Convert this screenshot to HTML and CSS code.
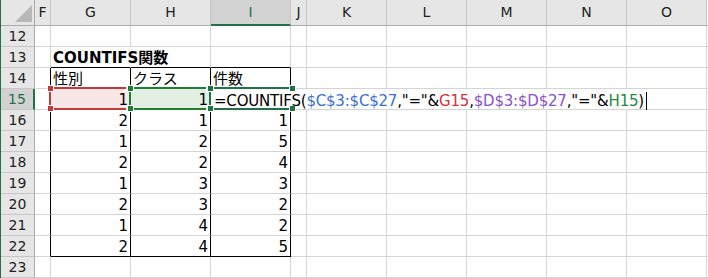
FILE: index.html
```html
<!DOCTYPE html>
<html lang="ja">
<head>
  <meta charset="UTF-8" />
  <title>COUNTIFS関数</title>
  <link rel="stylesheet" href="styles.css">
</head>
<body>

  <div class="sheet" id="sheet"></div>

  <script>
    const sheet = document.getElementById("sheet");
    const cols = ["F", "G", "H", "I", "J", "K", "L", "M", "N", "O"];
    const g = [1, 2, 1, 2, 1, 2, 1, 2];
    const h = [1, 1, 2, 2, 3, 3, 4, 4];
    const cnt = ["", 1, 5, 4, 3, 2, 2, 5];

    const formula =
      '=COUNTIFS(<span class="f-blue">$C$3:$C$27</span>,"="&amp;<span class="f-red">G15</span>,' +
      '<span class="f-purple">$D$3:$D$27</span>,"="&amp;<span class="f-green">H15</span>)<span class="caret"></span>';

    const corners = '<i class="sq tl"></i><i class="sq tr"></i><i class="sq bl"></i><i class="sq br"></i>';

    // header row
    let html = '<div class="c hd corner"><span class="tri"></span></div>';
    cols.forEach(c => {
      html += `<div class="c hd${c === "I" ? " hd-on" : ""}">${c}</div>`;
    });
    html += '<div class="c hd end"></div>';

    for (let r = 12; r <= 23; r++) {
      html += `<div class="c rh${r === 15 ? " rh-on" : ""}">${r}</div>`;
      cols.forEach(c => {
        let cls = "c";
        let txt = "";
        const inTable = r >= 14 && r <= 22;
        if (inTable && ["F", "G", "H", "I"].includes(c)) cls += " bk-r";
        if ((r === 13 || r === 14 || r === 22) && ["G", "H", "I"].includes(c)) cls += " bk-b";
        if (r === 15 && ["I", "J", "K", "L", "M", "N"].includes(c)) cls += " no-r";

        if (r === 13 && c === "G") { txt = '<b class="title">COUNTIFS関数</b>'; cls += " no-r"; }
        if (r === 14) {
          if (c === "G") txt = "性別";
          if (c === "H") txt = "クラス";
          if (c === "I") txt = "件数";
          if (["G", "H", "I"].includes(c)) cls += " jp";
        }
        if (r >= 15 && r <= 22) {
          const i = r - 15;
          if (c === "G") { txt = g[i]; cls += " num"; }
          if (c === "H") { txt = h[i]; cls += " num"; }
          if (c === "I" && r > 15) { txt = cnt[i]; cls += " num"; }
        }
        if (r === 15 && c === "G") txt = `<span class="ref ref-red">${corners}</span><span class="v">${txt}</span>`;
        if (r === 15 && c === "H") txt = `<span class="ref ref-green">${corners}</span><span class="v">${txt}</span>`;
        if (r === 15 && c === "I") {
          txt = `<span class="edit">${corners}</span><span class="v formula">${formula}</span>`;
        }
        html += `<div class="${cls}">${txt}</div>`;
      });
      html += '<div class="c end"></div>';
    }
    sheet.innerHTML = html;
  </script>

</body>
</html>
```

FILE: styles.css
```css
body {
  margin: 0;
  background: #fff;
}

.sheet {
  display: grid;
  grid-template-columns: 34px 16px repeat(3, 80px) 16px repeat(5, 80px) 1px;
  grid-template-rows: 26px repeat(12, 21px);
  border-left: 1px solid #217346;
  width: 707px;
  font-family: "DejaVu Sans", sans-serif;
  color: #000;
}

.c {
  box-sizing: border-box;
  position: relative;
  border-right: 1px solid #d4d4d4;
  border-bottom: 1px solid #d4d4d4;
  font-size: 15px;
  line-height: 17px;
  padding: 3px 2px 0;
  white-space: nowrap;
}

.c.end {
  border-right: none;
}

/* headers */
.hd {
  background: #e6e6e6;
  border-right-color: #c6c6c6;
  border-bottom-color: #ababab;
  text-align: center;
  font-size: 14px;
  line-height: 20px;
  padding: 2px 0 0;
  color: #222;
}

.hd.end {
  background: #fff;
  border-bottom-color: #ababab;
}

.hd-on {
  background: #d2d2d2;
  color: #217346;
  border-bottom: 2px solid #217346;
}

.corner {
  border-right-color: #ababab;
}

.tri {
  position: absolute;
  right: 2px;
  bottom: 3px;
  width: 0;
  height: 0;
  border-left: 17px solid transparent;
  border-bottom: 17px solid #b8b8b8;
}

.rh {
  background: #e6e6e6;
  border-right-color: #ababab;
  border-bottom-color: #c6c6c6;
  text-align: center;
  font-size: 14px;
  line-height: 18px;
  padding: 1px 0 0;
  color: #222;
}

.rh-on {
  background: #d2d2d2;
  color: #217346;
  border-right: 2px solid #217346;
}

/* table */
.bk-r {
  border-right-color: #000;
}

.bk-b {
  border-bottom-color: #000;
}

.no-r {
  border-right-color: transparent;
  overflow: visible;
}

.num {
  text-align: right;
}

.jp {
  font-family: "Noto Sans CJK JP", sans-serif;
  line-height: 18px;
  padding-top: 1px;
}

.title {
  font-family: "DejaVu Sans", "Noto Sans CJK JP", sans-serif;
  font-weight: bold;
  position: relative;
  z-index: 2;
}

.v {
  position: relative;
  z-index: 2;
}

.formula {
  letter-spacing: -0.2px;
  margin-left: 1px;
}

/* reference highlights */
.ref {
  position: absolute;
  left: -2px;
  top: -2px;
  right: -1px;
  bottom: -1px;
  border: 2px solid;
  z-index: 1;
}

.ref-red {
  border-color: #c4393e;
  background: #f9e6e6;
  color: #c4393e;
}

.ref-green {
  border-color: #1e7e34;
  background: #e3efe2;
  color: #1e7e34;
}

.edit {
  position: absolute;
  left: -2px;
  top: -2px;
  right: -1px;
  bottom: -1px;
  border-top: 2px solid #217346;
  border-bottom: 2px solid #217346;
  border-left: 2px solid #217346;
  color: #217346;
  z-index: 1;
}

.sq {
  position: absolute;
  width: 5px;
  height: 5px;
  background: currentColor;
  border: 1px solid #fff;
}

.sq.tl { left: -4px; top: -4px; }
.sq.tr { right: -4px; top: -4px; }
.sq.bl { left: -4px; bottom: -4px; }
.sq.br { right: -4px; bottom: -4px; }

.edit .sq.tr,
.edit .sq.br { right: -5px; }

.f-blue { color: #3b6fd6; }
.f-red { color: #d4323d; }
.f-purple { color: #8a50cf; }
.f-green { color: #238a3c; }

.caret {
  display: inline-block;
  width: 1px;
  height: 18px;
  background: #000;
  vertical-align: -4px;
  margin-left: 2px;
}
```
